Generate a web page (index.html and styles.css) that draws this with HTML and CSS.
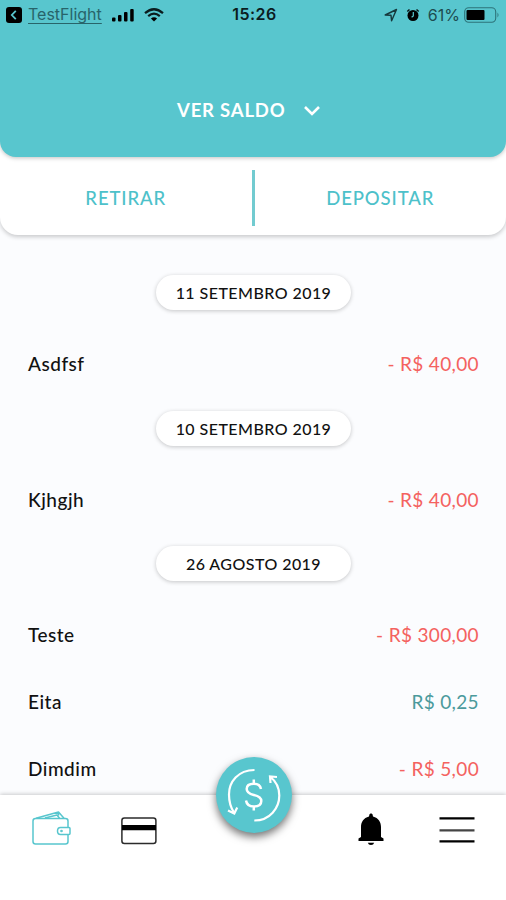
FILE: index.html
```html
<!DOCTYPE html>
<html lang="pt-BR">
<head>
<meta charset="utf-8">
<title>Carteira</title>
<link rel="stylesheet" href="styles.css">
</head>
<body>
<div class="app">
  <header class="header">
    <div class="status">
      <div class="status-left">
        <svg class="back" width="16" height="16" viewBox="0 0 16 16"><rect width="16" height="16" rx="3"/><path d="M9.800 3.800 5.800 8l4 4.200" fill="none" stroke="#58c6ce" stroke-width="1.800"/></svg>
        <span class="app-name">TestFlight</span>
        <svg class="signal" width="23" height="14" viewBox="0 0 23 14"><rect x="0" y="9.500" width="3.500" height="4" rx="1"/><rect x="6" y="7" width="3.500" height="6.500" rx="1"/><rect x="12" y="4" width="3.500" height="9.500" rx="1"/><rect x="18.200" y="1" width="3.500" height="12.500" rx="1"/></svg>
        <svg class="wifi" width="20" height="14" viewBox="0 0 20 14"><path d="M1 5.200Q10-2.700 19 5.200M4.200 8.200Q10 3.200 15.800 8.200" fill="none" stroke="#0b1c1e" stroke-width="2.200"/><path d="M6.900 10.400Q10 8 13.100 10.400L10 13.500z"/></svg>
      </div>
      <span class="clock">15:26</span>
      <div class="status-right">
        <svg width="14" height="14" viewBox="0 0 14 14"><path d="M1.200 7 12.500 1.500 7.600 12.800 7 7.300z" fill="none" stroke="#16383c" stroke-width="1.400" stroke-linejoin="round"/></svg>
        <svg class="alarm" width="14" height="14" viewBox="0 0 14 14"><circle cx="7" cy="7.500" r="5.500"/><path d="M1.300 3.500 3.500 1.500M12.700 3.500 10.500 1.500" stroke="#071416" stroke-width="1.500"/><path d="M7.300 4v4L5.600 9.300" fill="none" stroke="#58c6ce" stroke-width="1.200"/></svg>
        <span class="percent">61%</span>
        <svg class="battery" width="36" height="16" viewBox="0 0 36 16"><rect x=".7" y=".7" width="31" height="14.600" rx="4" fill="none" stroke="#2d7379" stroke-width="1.100"/><rect x="2.500" y="3" width="18" height="10" rx="1"/><path d="M33.500 5.500q2 2.500 0 5z" fill="#2d7379"/></svg>
      </div>
    </div>
    <button class="balance"><span>VER SALDO</span><svg width="18" height="12" viewBox="0 0 18 12"><path d="m2 2 7 7 7-7" fill="none" stroke="#fff" stroke-width="2.600"/></svg></button>
  </header>
  <section class="actions">
    <button class="action">RETIRAR</button>
    <span class="divider"></span>
    <button class="action">DEPOSITAR</button>
  </section>
  <main class="list">
    <h2 class="date">11 SETEMBRO 2019</h2>
    <div class="row"><span class="name">Asdfsf</span><span class="amount">- R$ 40,00</span></div>
    <h2 class="date">10 SETEMBRO 2019</h2>
    <div class="row"><span class="name">Kjhgjh</span><span class="amount">- R$ 40,00</span></div>
    <h2 class="date">26 AGOSTO 2019</h2>
    <div class="row"><span class="name">Teste</span><span class="amount">- R$ 300,00</span></div>
    <div class="row"><span class="name">Eita</span><span class="amount credit">R$ 0,25</span></div>
    <div class="row"><span class="name">Dimdim</span><span class="amount">- R$ 5,00</span></div>
  </main>
  <nav class="nav">
    <svg class="wallet" width="40" height="36" viewBox="0 0 40 36" fill="none" stroke="#58c6ce" stroke-width="1.500" stroke-linejoin="round"><path d="M36 16V10Q36 7.500 33.500 7.500H3.500Q1 7.500 1 10V30.500Q1 33 3.500 33H33.500Q36 33 36 30.500V24"/><path d="M4 7.200 26.500 1 32 7.200M13 7 25 4 27.500 7.200M26.500 1V4.500"/><path d="M37 16.500H28.500Q25.500 16.500 25.500 20T28.500 23.500H37Q38 23.500 38 22.500V17.500Q38 16.500 37 16.500z"/><circle cx="29.500" cy="20" r=".6"/></svg>
    <svg class="card" width="36" height="28" viewBox="0 0 36 28"><rect x=".9" y="1" width="34" height="25.500" rx="2.500" fill="none" stroke="#2b2b2b" stroke-width="1.500"/><path d="M1 8h34v5.200H1z"/></svg>
    <svg class="bell" width="26" height="33" viewBox="0 0 26 33"><path d="M13 .3Q15 .8 15 3.500C20.500 5 23 9 23 14V24L25.500 25.500V28H.5V25.500L3 24V14C3 9 5.500 5 11 3.500Q11 .8 13 .3zM9.800 29.700H16.200Q15.500 32 13 32T9.800 29.700z"/></svg>
    <svg class="menu" width="36" height="28" viewBox="0 0 36 28"><path d="M.5 2.300h35M.5 25.300h35" stroke="#000" stroke-width="2.300"/><path d="M.5 14.300h35" stroke="#444" stroke-width="2.300"/></svg>
    <button class="fab" aria-label="Transferir"><svg width="76" height="76" viewBox="0 0 76 76" fill="none" stroke="#fff" stroke-width="2.200"><path d="M38.500 13C22 13 13 25 13 37.500Q13 48 18 55.500M12 53.500 18.300 56.500 21.200 50.500"/><path d="M38.300 63.500C54 63.500 63.300 51 63.300 38.500Q63.300 27 54.500 20M61 20 54 19.500 54.500 26"/><path d="M45 32Q44 26.800 37.800 26.800C33 26.800 30.700 29 30.700 32C30.700 35.500 33.500 37 37.800 38S45.300 40.500 45.300 44C45.300 47.500 42.500 49.500 37.800 49.500Q31 49.500 30 43.500M37.800 22.500V27M37.800 49V53.500" stroke-width="2.500"/></svg></button>
  </nav>
</div>
</body>
</html>
```
FILE: styles.css
```css
* { box-sizing: border-box; }
body { margin: 0; font-family: Lato, "Open Sans", sans-serif; color: #111; background: #fbfcfe; }
button { border: 0; padding: 0; background: none; font: inherit; }
svg { display: block; flex: none; }
.app { width: 506px; height: 900px; display: flex; flex-direction: column; overflow: hidden; }
.header { height: 157px; flex: none; position: relative; z-index: 2; background: #58c6ce; border-radius: 0 0 16px 16px; box-shadow: 0 1px 4px rgba(0,0,0,.25); }
.status { height: 29px; display: grid; grid-template-columns: 1fr auto 1fr; align-items: center; padding: 0 6px; font-family: Inter, "Liberation Sans", sans-serif; color: #12363a; }
.status-left, .status-right { display: flex; align-items: center; }
.status-right { justify-content: flex-end; }
.app-name { margin-left: 6px; font-size: 16px; line-height: 17px; text-decoration: underline; text-underline-offset: 3px; color: #28646a; }
.signal { margin-left: 10px; }
.wifi { margin-left: 9px; }
.clock { font-size: 16px; font-weight: 600; letter-spacing: .5px; color: #0b1c1e; padding-left: 3px; line-height: 17px; margin-top: -1px; }
.alarm { margin-left: 8px; }
.percent { margin: 0 4px 0 8px; font-size: 16px; color: #1d4b50; }
.balance { display: flex; align-items: center; gap: 18px; margin: 68px 0 0 177px; height: 26px; color: #fff; font-size: 18.5px; font-weight: 700; letter-spacing: .8px; white-space: nowrap; }
.balance svg { margin-top: 2px; }
.actions { height: 94px; flex: none; margin-top: -16px; padding-top: 16px; display: grid; grid-template-columns: 1fr 3px 1fr; align-items: center; background: #fff; border-radius: 0 0 18px 18px; box-shadow: 0 2px 4px rgba(0,0,0,.2); position: relative; z-index: 1; }
.action { height: 40px; color: #4dc1ca; font-size: 18.5px; font-weight: 500; letter-spacing: .9px; padding-top: 3px; }
.divider { height: 56px; margin-top: 3px; background: #72cbd0; }
.list { flex: 1; min-height: 0; padding: 40px 27px 0 28px; display: flex; flex-direction: column; overflow: hidden; }
.date { flex: none; width: 195px; height: 35px; margin: 0 auto 20px; border-radius: 18px; background: #fff; box-shadow: 0 1px 4px rgba(0,0,0,.22); display: flex; align-items: center; justify-content: center; font-size: 16px; font-weight: 500; letter-spacing: .45px; white-space: nowrap; }
.row + .date { margin-top: 13.7px; }
.row { flex: none; height: 67px; display: flex; align-items: center; justify-content: space-between; font-size: 19px; }
.name { font-weight: 500; letter-spacing: .5px; }
.amount { color: #f4625f; letter-spacing: .35px; }
.credit { color: #4b9a9c; }
.nav { position: relative; z-index: 3; flex: none; height: 105px; background: #fff; box-shadow: 0 -1px 4px rgba(0,0,0,.2); display: flex; align-items: flex-start; padding-left: 32px; }
.wallet { margin-top: 16px; }
.card { margin: 22px 0 0 49px; }
.bell { margin: 18px 0 0 201px; }
.menu { margin: 21px 0 0 55px; }
.fab { position: absolute; left: 216px; top: -38px; width: 76px; height: 76px; border-radius: 50%; background: #58c6ce; box-shadow: 0 4px 9px rgba(0,0,0,.55); }
```
